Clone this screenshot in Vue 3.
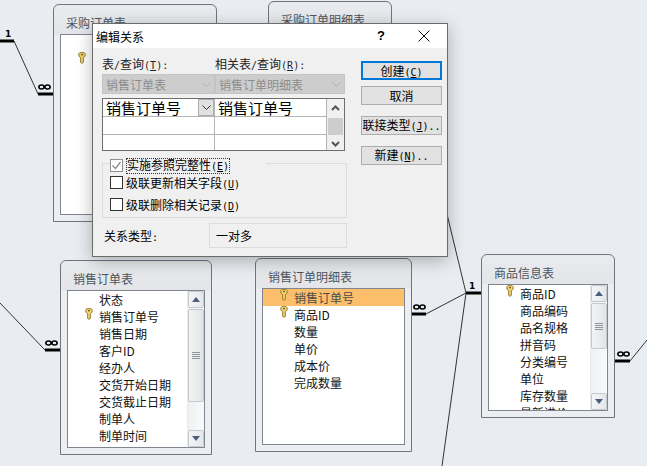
<script setup>
const tables = [
  { name: '采购订单表', x: 53, y: 4, w: 164, h: 218, fields: [{ text: '', key: false }, { text: '', key: true }], scroll: false },
  { name: '采购订单明细表', x: 268, y: 1, w: 124, h: 60, fields: [], scroll: false },
  {
    name: '销售订单表', x: 60, y: 260, w: 152, h: 195, scroll: true, thumb: 93,
    fields: [
      { text: '状态' }, { text: '销售订单号', key: true }, { text: '销售日期' }, { text: '客户ID' }, { text: '经办人' },
      { text: '交货开始日期' }, { text: '交货截止日期' }, { text: '制单人' }, { text: '制单时间' }, { text: '审核人' }
    ]
  },
  {
    name: '销售订单明细表', x: 255, y: 258, w: 157, h: 194, scroll: false,
    fields: [
      { text: '销售订单号', key: true, active: true }, { text: '商品ID', key: true }, { text: '数量' },
      { text: '单价' }, { text: '成本价' }, { text: '完成数量' }
    ]
  },
  {
    name: '商品信息表', x: 481, y: 254, w: 134, h: 164, scroll: true, thumb: 46,
    fields: [
      { text: '商品ID', key: true }, { text: '商品编码' }, { text: '品名规格' }, { text: '拼音码' },
      { text: '分类编号' }, { text: '单位' }, { text: '库存数量' }, { text: '最新进价' }
    ]
  }
]

// thick end stubs and thin joins between the tables
const stubs = [
  [0, 41, 14, 41], [38, 94, 53, 94], [45, 350, 60, 350],
  [411, 314, 426, 314], [466, 293, 481, 293], [615, 361, 630, 361]
]
const links = [
  [14, 41, 38, 94], [0, 303, 45, 350], [426, 314, 466, 293],
  [466, 293, 442, 466], [466, 293, 446, 210], [630, 361, 647, 340]
]
const ones = [[5, 37], [469, 289]]
const manys = [[44.5, 89], [419.5, 309], [51.5, 345], [623.5, 356]]

function place(t) {
  return { left: t.x + 'px', top: t.y + 'px', width: t.w + 'px', height: t.h + 'px' }
}
</script>

<template>
  <div class="canvas">
    <svg class="lines" width="647" height="466">
      <line v-for="(l, i) in links" :key="'l' + i" :x1="l[0]" :y1="l[1]" :x2="l[2]" :y2="l[3]" stroke="#333" stroke-width="1" />
      <line v-for="(s, i) in stubs" :key="'s' + i" :x1="s[0]" :y1="s[1]" :x2="s[2]" :y2="s[3]" stroke="#000" stroke-width="3" />
      <text v-for="(o, i) in ones" :key="'o' + i" :x="o[0]" :y="o[1]" class="one">1</text>
      <g v-for="(m, i) in manys" :key="'m' + i" fill="none" stroke="#000" stroke-width="1.6">
        <ellipse :cx="m[0] - 3" :cy="m[1] - 2" rx="2.6" ry="2" />
        <ellipse :cx="m[0] + 3" :cy="m[1] - 2" rx="2.6" ry="2" />
      </g>
    </svg>

    <div v-for="t in tables" :key="t.name" class="table-win" :style="place(t)">
      <div class="table-title">{{ t.name }}</div>
      <div class="table-list">
        <div class="rows">
          <div v-for="(f, i) in t.fields" :key="i" class="row" :class="{ active: f.active }">
            <svg v-if="f.key" class="key" width="8" height="12" viewBox="0 0 9 13">
              <path d="M1 1.5 2 .5h5l1 1v3L6 6v5.500L4.500 12.500 3 11.500V6L1 4.500z" fill="#f2d675" stroke="#8a6d1f" stroke-width="1" />
              <rect x="3.500" y="2" width="2" height="1.500" fill="#6b5514" />
            </svg>
            <span class="field">{{ f.text }}</span>
          </div>
        </div>
        <div v-if="t.scroll" class="vbar">
          <div class="sbtn"><i class="tri up"></i></div>
          <div class="thumb" :style="{ height: t.thumb + 'px' }"><b></b><b></b><b></b><b></b></div>
          <div class="track"></div>
          <div class="sbtn"><i class="tri down"></i></div>
        </div>
      </div>
    </div>

    <div class="dialog">
      <div class="dlg-title">
        <span class="dlg-name">编辑关系</span>
        <span class="dlg-help">?</span>
        <svg class="dlg-close" width="12" height="12" viewBox="0 0 12 12">
          <path d="M.5.5l11 11M11.500.5l-11 11" stroke="#111" stroke-width="1" fill="none" />
        </svg>
      </div>
      <div class="dlg-body">
        <div class="dlg-left">
          <div class="head-row">
            <span class="col-a">表<span class="hot">/</span>查询<span class="hot">(<u>T</u>):</span></span>
            <span>相关表<span class="hot">/</span>查询<span class="hot">(<u>R</u>):</span></span>
          </div>
          <div class="combo-row">
            <div class="combo col-a">销售订单表
              <svg width="9" height="5" viewBox="0 0 9 5"><path d="M.5.5l4 4 4-4" fill="none" stroke="#b0b0b0" /></svg>
            </div>
            <div class="combo col-b">销售订单明细表
              <svg width="9" height="5" viewBox="0 0 9 5"><path d="M.5.5l4 4 4-4" fill="none" stroke="#b0b0b0" /></svg>
            </div>
          </div>
          <div class="grid">
            <div class="grid-cells">
              <div class="cell c1 big">销售订单号
                <span class="drop"><svg width="9" height="5" viewBox="0 0 9 5"><path d="M.5.5l4 4 4-4" fill="none" stroke="#333" /></svg></span>
              </div>
              <div class="cell c2 big">销售订单号</div>
              <div class="cell c1"></div>
              <div class="cell c2"></div>
              <div class="cell c1 last"></div>
              <div class="cell c2 last"></div>
            </div>
            <div class="grid-bar">
              <svg width="9" height="6" viewBox="0 0 9 6"><path d="M1 5l3.500-3.500L8 5" fill="none" stroke="#555" stroke-width="2" /></svg>
              <div class="grid-thumb"></div>
              <svg width="9" height="6" viewBox="0 0 9 6"><path d="M1 1l3.500 3.500L8 1" fill="none" stroke="#555" stroke-width="2" /></svg>
            </div>
          </div>
          <fieldset class="group">
            <legend class="legend">
              <span class="check dim">
                <svg width="11" height="11" viewBox="0 0 11 11"><path d="M1.500 5.500l3 3 5-6.500" fill="none" stroke="#8a8a8a" stroke-width="1.300" /></svg>
              </span>
              <span class="focus">实施参照完整性<span class="hot">(<u>E</u>)</span></span>
            </legend>
            <div class="check-row first"><span class="check"></span><span>级联更新相关字段<span class="hot">(<u>U</u>)</span></span></div>
            <div class="check-row"><span class="check"></span><span>级联删除相关记录<span class="hot">(<u>D</u>)</span></span></div>
          </fieldset>
          <div class="type-row">
            <span class="type-label">关系类型<span class="hot">:</span></span>
            <div class="type-box">一对多</div>
          </div>
        </div>
        <div class="dlg-right">
          <button class="btn primary">创建<span class="hot">(<u>C</u>)</span></button>
          <button class="btn">取消</button>
          <button class="btn gap">联接类型<span class="hot">(<u>J</u>)..</span></button>
          <button class="btn gap">新建<span class="hot">(<u>N</u>)..</span></button>
        </div>
      </div>
    </div>
  </div>
</template>

<style scoped>
.canvas {
  position: relative;
  width: 647px;
  height: 466px;
  overflow: hidden;
  background: #e9edf1;
  font-family: "Noto Sans CJK SC", "Liberation Sans", sans-serif;
  font-size: 12px;
  color: #000;
}
.lines {
  position: absolute;
  left: 0;
  top: 0;
}
.one {
  font-family: "DejaVu Sans", sans-serif;
  font-size: 9px;
  font-weight: 700;
}
.table-win {
  position: absolute;
  box-sizing: border-box;
  display: flex;
  flex-direction: column;
  padding: 0 6px 6px;
  border: 1px solid #6f7680;
  border-radius: 6px 6px 0 0;
  background: linear-gradient(#e9ebee, #e3e5e8 29px, #eceef1 30px);
}
.table-title {
  height: 29px;
  flex: none;
  padding: 8px 6px 0;
  box-sizing: border-box;
  line-height: 20px;
  color: #4c5560;
  white-space: nowrap;
}
.table-list {
  flex: 1;
  min-height: 0;
  display: flex;
  border: 1px solid #7f8690;
  background: #fff;
  overflow: hidden;
}
.rows {
  flex: 1;
  min-width: 0;
  overflow: hidden;
}
.row {
  position: relative;
  height: 17px;
  line-height: 17px;
  padding-left: 31px;
  white-space: nowrap;
  color: #111;
}
.row.active {
  background: #fdbf6c;
  color: #4a4a4a;
}
.key {
  position: absolute;
  left: 17px;
  top: 0;
}
.vbar {
  width: 16px;
  flex: none;
  display: flex;
  flex-direction: column;
  margin: 0;
  background: linear-gradient(90deg, #eef0f2, #f9fafb);
  border-left: 1px solid #e8eaed;
}
.sbtn {
  height: 17px;
  flex: none;
  box-sizing: border-box;
  border: 1px solid #c4c9cf;
  border-radius: 2px;
  background: linear-gradient(90deg, #f4f5f7, #e4e7ea);
  display: flex;
  align-items: center;
  justify-content: center;
}
.tri {
  width: 0;
  height: 0;
  border-left: 4px solid transparent;
  border-right: 4px solid transparent;
}
.tri.up {
  border-bottom: 5px solid #4d5d80;
}
.tri.down {
  border-top: 5px solid #4d5d80;
}
.thumb {
  flex: none;
  box-sizing: border-box;
  margin-top: 1px;
  border: 1px solid #c4c9cf;
  border-radius: 2px;
  background: linear-gradient(90deg, #f2f3f5, #e2e5e8);
  display: flex;
  flex-direction: column;
  align-items: center;
  justify-content: center;
  gap: 1px;
}
.thumb b {
  display: block;
  width: 8px;
  height: 1px;
  background: #8f97a3;
}
.track {
  flex: 1;
}

.dialog {
  position: absolute;
  left: 92px;
  top: 23px;
  width: 356px;
  height: 234px;
  box-sizing: border-box;
  display: flex;
  flex-direction: column;
  background: #f0f0f0;
  border: 1px solid #6b6b6b;
  box-shadow: 0 4px 16px rgba(0, 0, 0, 0.28);
}
.dlg-title {
  position: relative;
  height: 24px;
  flex: none;
  background: #fff;
  display: flex;
  align-items: center;
}
.dlg-name {
  margin-left: 3px;
}
.dlg-help {
  position: absolute;
  left: 284px;
  top: 4px;
  font: 700 13px "Liberation Sans", sans-serif;
}
.dlg-close {
  position: absolute;
  left: 325px;
  top: 6px;
}
.dlg-body {
  flex: 1;
  display: flex;
  padding: 6px 0 0 9px;
}
.dlg-left {
  width: 245px;
  flex: none;
}
.hot {
  font-family: "DejaVu Sans Mono", monospace;
  font-size: 10px;
}
.head-row {
  height: 20px;
  line-height: 20px;
  display: flex;
  white-space: nowrap;
  color: #222;
}
.col-a {
  width: 113px;
  flex: none;
}
.combo-row {
  display: flex;
  width: 243px;
}
.combo {
  box-sizing: border-box;
  height: 20px;
  display: flex;
  align-items: center;
  justify-content: space-between;
  padding: 0 3px 0 3px;
  background: #cdcdcd;
  color: #8c8c8c;
  border: 1px solid #c4c4c4;
  white-space: nowrap;
}
.col-b {
  flex: 1;
}
.grid {
  width: 243px;
  height: 53px;
  margin-top: 4px;
  box-sizing: border-box;
  border: 1px solid #6e6e6e;
  background: #fff;
  display: flex;
}
.grid-cells {
  flex: 1;
  display: grid;
  grid-template-columns: 112px 1fr;
  grid-template-rows: 18px 18px 1fr;
  min-width: 0;
}
.cell {
  box-sizing: border-box;
  border-bottom: 1px solid #b4b4b4;
  display: flex;
  align-items: center;
  justify-content: space-between;
  white-space: nowrap;
}
.cell.c1 {
  border-right: 1px solid #b4b4b4;
}
.cell.last {
  border-bottom: 0;
}
.big {
  font-size: 15px;
  padding-left: 3px;
  line-height: 15px;
}
.drop {
  width: 16px;
  height: 17px;
  box-sizing: border-box;
  background: #e1e1e1;
  border: 1px solid #adadad;
  display: flex;
  align-items: center;
  justify-content: center;
}
.grid-bar {
  width: 18px;
  flex: none;
  border-left: 1px solid #b4b4b4;
  background: #f0f0f0;
  display: flex;
  flex-direction: column;
  align-items: center;
  justify-content: space-between;
  padding: 6px 0 3px;
  box-sizing: border-box;
}
.grid-thumb {
  width: 15px;
  height: 17px;
  background: #cdcdcd;
}
.group {
  width: 245px;
  height: 59px;
  margin: 8px 0 0;
  padding: 0 0 0 7px;
  box-sizing: border-box;
  border: 1px solid #dcdcdc;
  border-radius: 0;
  min-width: 0;
}
.legend {
  width: 156px;
  box-sizing: border-box;
  padding: 0;
  margin-left: 0;
  display: flex;
  align-items: flex-start;
  gap: 2px;
  height: 8px;
  line-height: 14px;
  white-space: nowrap;
}
.focus {
  outline: 1px dotted #333;
  outline-offset: -1px;
  padding: 0 1px;
  margin-top: -1px;
}
.check-row {
  display: flex;
  align-items: center;
  gap: 2px;
  height: 14px;
  margin-top: 8px;
  white-space: nowrap;
}
.check-row.first {
  margin-top: 8px;
}
.check {
  box-sizing: border-box;
  width: 13px;
  height: 13px;
  flex: none;
  border: 1px solid #333;
  background: #fff;
  display: inline-flex;
  margin-right: 1px;
}
.check.dim {
  border-color: #8f8f8f;
}
.type-row {
  display: flex;
  align-items: center;
  margin-top: 5px;
}
.type-label {
  width: 107px;
  flex: none;
  padding-left: 2px;
  box-sizing: border-box;
}
.type-box {
  width: 138px;
  height: 25px;
  box-sizing: border-box;
  border: 1px solid #dcdcdc;
  line-height: 23px;
  padding-left: 6px;
}
.dlg-right {
  display: flex;
  flex-direction: column;
  margin-left: 14px;
  padding-top: 7px;
}
.btn {
  width: 81px;
  height: 19px;
  box-sizing: border-box;
  padding: 0;
  margin: 0 0 6px;
  border: 1px solid #adadad;
  border-radius: 0;
  background: #e1e1e1;
  font: inherit;
  line-height: 16px;
  color: #000;
  white-space: nowrap;
}
.btn.primary {
  border: 2px solid #0078d7;
}
.btn.gap {
  margin: 5px 0 6px;
}
</style>

<style>
html, body {
  margin: 0;
  background: #e9edf1;
}
</style>
